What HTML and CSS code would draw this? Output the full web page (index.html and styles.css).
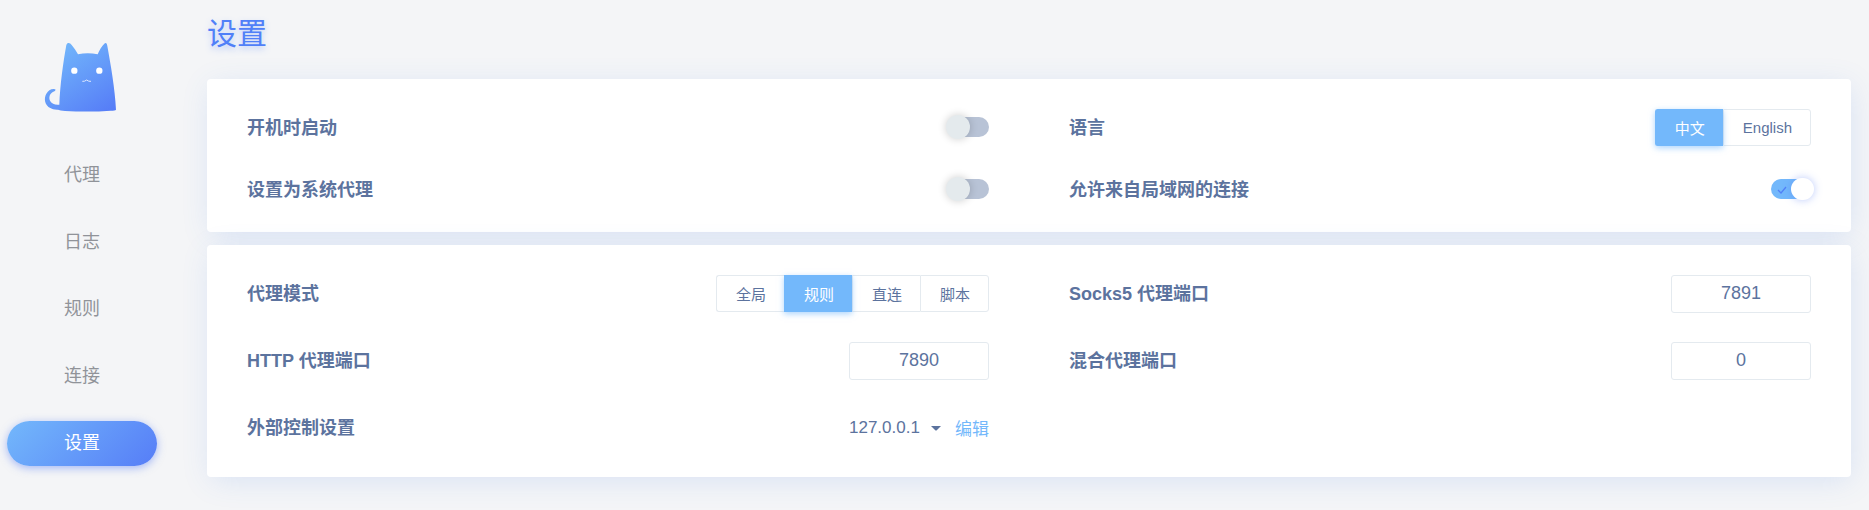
FILE: index.html
```
<!DOCTYPE html>
<html lang="zh-CN">
<head>
<meta charset="utf-8">
<title>设置</title>
<link rel="stylesheet" href="styles.css">
</head>
<body>
<div class="app">
  <aside class="sidebar">
    <svg class="logo" viewBox="0 0 240 240" aria-hidden="true">
      <defs>
        <linearGradient id="fur" x1="0.2" y1="0" x2="0.9" y2="1">
          <stop offset="0" stop-color="#73b8fb"/>
          <stop offset="1" stop-color="#567df7"/>
        </linearGradient>
      </defs>
      <path fill="url(#fur)" d="M58 209 C60 150 70 80 79 30 Q81 23 86 24 Q91 24 95 30 C102 39 109 48 114 58 Q143 52 173 58 C178 45 186 33 193 26 Q196 23 199 25 Q201 27 202 33 C212 90 225 160 228 224 Q226 227 212 227 Q150 232 75 228 Q60 227 54 224 C36 225 22 217 17 205 C11 190 17 170 34 163 Q44 160 47 164 Q46 168 40 170 C29 175 25 188 31 199 C36 207 44 210 58 209 Z"/>
      <circle class="logo-eye" cx="103" cy="107" r="9.500"/>
      <circle class="logo-eye" cx="178" cy="107" r="9.500"/>
      <path class="logo-mouth" d="M127 139 Q134 140 140 135 Q146 140 153 139"/>
    </svg>
    <nav class="menu">
      <a class="menu-item" href="#proxies">代理</a>
      <a class="menu-item" href="#logs">日志</a>
      <a class="menu-item" href="#rules">规则</a>
      <a class="menu-item" href="#connections">连接</a>
      <a class="menu-item active" href="#settings" aria-current="page">设置</a>
    </nav>
  </aside>

  <main class="page">
    <h1 class="title">设置</h1>

    <section class="card card-general">
      <div class="row">
        <label class="label" for="boot">开机时启动</label>
        <input class="switch" type="checkbox" id="boot">
      </div>
      <div class="row">
        <span class="label" id="lang-label">语言</span>
        <div class="group" role="group" aria-labelledby="lang-label">
          <button class="option selected" type="button" aria-pressed="true">中文</button>
          <button class="option" type="button" aria-pressed="false">English</button>
        </div>
      </div>
      <div class="row">
        <label class="label" for="system">设置为系统代理</label>
        <input class="switch" type="checkbox" id="system">
      </div>
      <div class="row">
        <label class="label" for="lan">允许来自局域网的连接</label>
        <span class="switch-wrap">
          <input class="switch" type="checkbox" id="lan" checked>
          <svg class="check" viewBox="0 0 10 8" aria-hidden="true"><path d="M1 4 L4 7 L9 1"/></svg>
        </span>
      </div>
    </section>

    <section class="card card-proxy">
      <div class="row">
        <span class="label" id="mode-label">代理模式</span>
        <div class="group" role="group" aria-labelledby="mode-label">
          <button class="option" type="button" aria-pressed="false">全局</button>
          <button class="option selected" type="button" aria-pressed="true">规则</button>
          <button class="option" type="button" aria-pressed="false">直连</button>
          <button class="option" type="button" aria-pressed="false">脚本</button>
        </div>
      </div>
      <div class="row">
        <label class="label" for="socks">Socks5 代理端口</label>
        <input class="port" type="text" inputmode="numeric" id="socks" value="7891">
      </div>
      <div class="row">
        <label class="label" for="http">HTTP 代理端口</label>
        <input class="port" type="text" inputmode="numeric" id="http" value="7890">
      </div>
      <div class="row">
        <label class="label" for="mixed">混合代理端口</label>
        <input class="port" type="text" inputmode="numeric" id="mixed" value="0">
      </div>
      <div class="row">
        <label class="label" for="host">外部控制设置</label>
        <div class="controller">
          <span class="select-wrap">
            <select class="host" id="host"><option>127.0.0.1</option></select>
            <svg class="caret" viewBox="0 0 10 6" aria-hidden="true"><path d="M0 1 H10 L6 5 Q5 6 4 5 Z"/></svg>
          </span>
          <a class="edit" href="#edit">编辑</a>
        </div>
      </div>
    </section>
  </main>
</div>
</body>
</html>
```
FILE: styles.css
```
* {
  box-sizing: border-box;
}

body {
  margin: 0;
  background: #f4f5f7;
  color: #5c739e;
  font-family: "Liberation Sans", "Noto Sans CJK SC", sans-serif;
  font-size: 18px;
}

button,
input,
select {
  font-family: inherit;
}

a {
  text-decoration: none;
}

.app {
  display: flex;
  min-height: 100vh;
}

.sidebar {
  flex: none;
  width: 164px;
  display: flex;
  flex-direction: column;
  align-items: center;
  padding-top: 35px;
}

.logo {
  width: 80px;
  height: 80px;
  margin-right: 4px;
}

.logo-eye {
  fill: #fff;
}

.logo-mouth {
  fill: none;
  stroke: #dfe9ff;
  stroke-width: 3;
}

.menu {
  display: flex;
  flex-direction: column;
  gap: 22px;
  margin-top: 38px;
}

.menu-item {
  width: 150px;
  height: 45px;
  border-radius: 23px;
  line-height: 45px;
  text-align: center;
  color: #909399;
}

.menu-item.active {
  color: #fff;
  background: linear-gradient(135deg, #73b8fb, #567df7);
  box-shadow: 0 2px 8px rgba(80, 120, 246, 0.5);
}

.page {
  flex: 1;
  min-width: 0;
  padding: 12px 18px 32px 43px;
}

.title {
  margin: 0 0 23px;
  font-size: 30px;
  line-height: 44px;
  font-weight: 400;
  color: #5080f8;
  text-shadow: 0 3px 6px rgba(80, 128, 248, 0.35);
}

.card {
  display: grid;
  grid-template-columns: 1fr 1fr;
  border-radius: 4px;
  background: #fff;
  box-shadow: 2px 5px 30px -3px rgba(70, 130, 230, 0.17);
}

.card-general {
  grid-auto-rows: 62px;
  padding: 17px 0 12px;
}

.card-proxy {
  grid-auto-rows: 67px;
  margin-top: 13px;
  padding: 15px 0 16px;
}

.row {
  display: flex;
  align-items: center;
  justify-content: space-between;
  padding: 0 40px;
}

.label {
  padding-bottom: 3px;
  font-weight: 700;
}

.switch-wrap {
  position: relative;
  display: flex;
}

.switch {
  appearance: none;
  position: relative;
  width: 40px;
  height: 20px;
  margin: 0;
  border-radius: 10px;
  background: #b8c3d6;
}

.switch::before {
  content: "";
  position: absolute;
  top: -2px;
  left: -3px;
  width: 24px;
  height: 24px;
  border-radius: 12px;
  background: #e4eaed;
  box-shadow: 0 0 8px rgba(0, 0, 0, 0.2);
}

.switch:checked {
  background: #73b8fb;
}

.switch:checked::before {
  top: -1px;
  left: 20px;
  width: 23px;
  height: 22px;
  background: #fff;
  box-shadow: 0 0 8px rgba(80, 120, 246, 0.4);
}

.check {
  position: absolute;
  top: 7px;
  left: 6px;
  width: 10px;
  height: 8px;
  fill: none;
  stroke: #5080f8;
  stroke-width: 1.250;
}

.group {
  display: flex;
}

.option {
  height: 37px;
  padding: 0 18px 0 19px;
  border: 1px solid #e4eaef;
  border-right-width: 0;
  background: #fff;
  font-size: 15px;
  color: #5c739e;
}

.option:first-child {
  border-radius: 3px 0 0 3px;
}

.option:last-child {
  border-right-width: 1px;
  border-radius: 0 3px 3px 0;
}

.option.selected {
  z-index: 1;
  border-color: #73b8fb;
  background: #73b8fb;
  color: #fff;
  box-shadow: 0 2px 6px rgba(115, 184, 251, 0.6);
}

.port {
  width: 140px;
  height: 38px;
  padding: 0;
  border: 1px solid #e4eaef;
  border-radius: 3px;
  background: #fff;
  text-align: center;
  font-size: 18px;
  color: #5c739e;
}

.controller {
  display: flex;
  align-items: center;
  gap: 14px;
  font-size: 17px;
}

.select-wrap {
  position: relative;
  display: flex;
  align-items: center;
}

.host {
  appearance: none;
  margin: 0;
  padding: 0 21px 0 0;
  border: 0;
  background: transparent;
  font-size: 17px;
  color: #5c739e;
}

.caret {
  position: absolute;
  right: 0;
  width: 10px;
  height: 6px;
  fill: #5c739e;
  pointer-events: none;
}

.edit {
  color: #73b8fb;
}
```
